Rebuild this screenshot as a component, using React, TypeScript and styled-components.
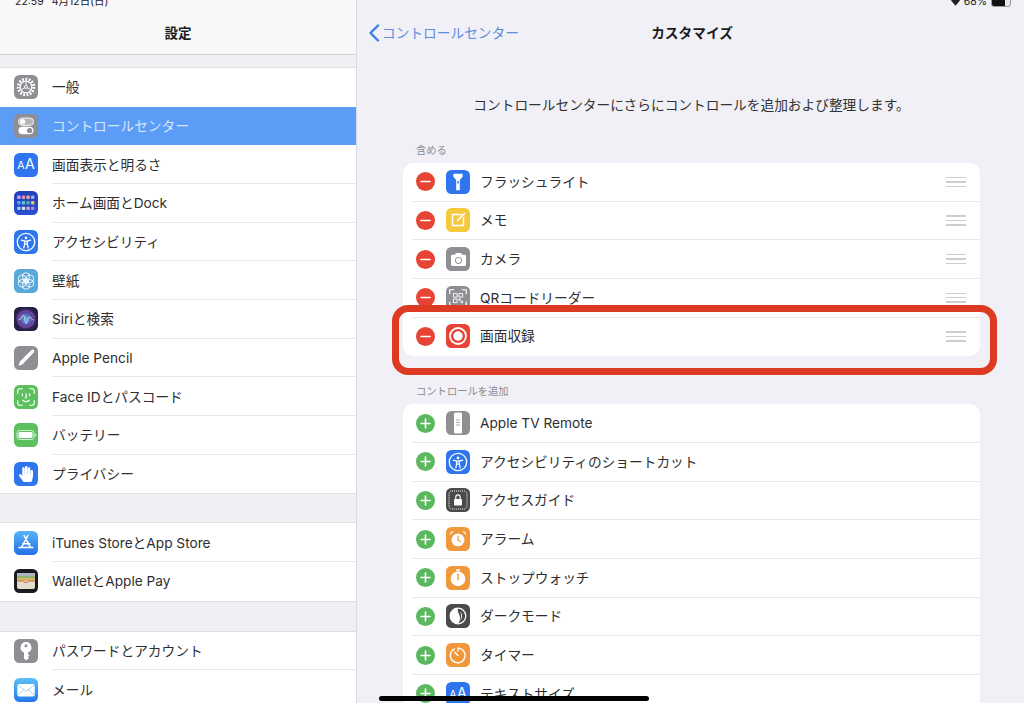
import type { ReactNode } from "react";
import styled, { createGlobalStyle } from "styled-components";
import { FaHandPaper, FaCamera } from "react-icons/fa";

const GlobalStyle = createGlobalStyle`
  html, body {
    margin: 0;
    padding: 0;
    width: 1024px;
    height: 703px;
    overflow: hidden;
    background: #f0f0f6;
  }
  body {
    font-family: Inter, "Noto Sans CJK JP", "Liberation Sans", sans-serif;
    color: #2e2e30;
  }
`

const Screen = styled.div`
  position: relative;
  width: 1024px;
  height: 703px;
  display: grid;
  grid-template-columns: 357px 1fr;
  overflow: hidden;
`

const StatusText = styled.div`
  position: absolute;
  top: -5px;
  font-size: 10.5px;
  line-height: 14px;
  color: #222;
  display: flex;
  align-items: center;
  gap: 4px;
`

const TimeText = styled(StatusText)`
  left: 15px;
  word-spacing: 5px;
`

const BatteryText = styled(StatusText)`
  right: 13px;
`

const Battery = styled.span`
  width: 20px;
  height: 10px;
  border-radius: 3px;
  background: linear-gradient(to right, #111 70%, #e8e8ec 70%);
  border: 1px solid #999;
  box-sizing: border-box;
`

const Sidebar = styled.aside`
  background: #efeff4;
  border-right: 1px solid #dcdce0;
  overflow: hidden;
`

const SideNav = styled.header`
  background: #f8f8f9;
  border-bottom: 1px solid #d2d2d6;
  display: flex;
  align-items: center;
  justify-content: center;
  padding-top: 11px;
  height: 43px;
  font-size: 13.5px;
  line-height: 20px;
  font-weight: 700;
  color: #1c1c1e;
`

const SideGroup = styled.div<{ $gap: number }>`
  margin-top: ${(p) => p.$gap}px;
  background: #fff;
  border-top: 1px solid #dfdfe3;
  border-bottom: 1px solid #dfdfe3;
`

const SideRow = styled.div<{ $active?: boolean }>`
  height: 38.67px;
  box-sizing: border-box;
  padding-left: 14px;
  display: flex;
  align-items: center;
  gap: 14px;
  background: ${(p) => (p.$active ? "#5b9cf6" : "#fff")};
  color: ${(p) => (p.$active ? "#d8e6fc" : "inherit")};
`

const SideLabel = styled.div<{ $line: boolean }>`
  flex: 1;
  height: 100%;
  display: flex;
  align-items: center;
  padding-top: 1px;
  font-size: 13.7px;
  line-height: 20px;
  border-bottom: ${(p) => (p.$line ? "1px solid #e6e6e8" : "1px solid transparent")};
  box-sizing: border-box;
`

const Tile = styled.div<{ $bg: string }>`
  width: 24px;
  height: 24px;
  flex: none;
  border-radius: 5.5px;
  background: ${(p) => p.$bg};
  display: flex;
  align-items: center;
  justify-content: center;
  color: #fff;
  overflow: hidden;

  svg {
    display: block;
  }
`

const TileText = styled.span`
  font-size: 14px;
  line-height: 1;
  color: #fff;

  small {
    font-size: 10.5px;
    margin-right: 0.5px;
  }
`

const Main = styled.main`
  position: relative;
  overflow: hidden;
`

const MainNav = styled.header`
  height: 54px;
  padding: 11px 8px 0 11px;
  box-sizing: border-box;
  display: grid;
  grid-template-columns: 1fr auto 1fr;
  align-items: center;
  line-height: 20px;
`

const BackLink = styled.div`
  display: flex;
  align-items: center;
  gap: 2px;
  color: #5d8de0;
  font-size: 13.7px;
`

const NavTitle = styled.div`
  font-size: 13.7px;
  font-weight: 700;
  color: #1c1c1e;
`

const Content = styled.div`
  padding: 41px 44px 0 46px;
`

const Description = styled.p`
  margin: 0;
  text-align: center;
  font-size: 13.7px;
  line-height: 20px;
  color: #333;
`

const SectionTitle = styled.h3<{ $top: number }>`
  margin: ${(p) => p.$top}px 0 6px 13px;
  font-size: 10.3px;
  line-height: 14px;
  font-weight: 400;
  color: #8b8b90;
`

const Card = styled.div`
  background: #fff;
  border-radius: 10px;
  overflow: hidden;
`

const ControlRow = styled.div<{ $line: boolean }>`
  height: 38.67px;
  box-sizing: border-box;
  margin-left: 9px;
  padding: 0 14px 0 4px;
  display: flex;
  align-items: center;
  border-bottom: ${(p) => (p.$line ? "1px solid #e6e6e8" : "1px solid transparent")};
`

const Badge = styled.div<{ $add: boolean }>`
  width: 19px;
  height: 19px;
  border-radius: 50%;
  flex: none;
  margin-right: 11px;
  background: ${(p) => (p.$add ? "#5cb85f" : "#e74436")};
  display: flex;
  align-items: center;
  justify-content: center;
`

const ControlLabel = styled.div`
  flex: 1;
  margin-left: 10px;
  font-size: 13.7px;
  line-height: 20px;
`

const Handle = styled.div`
  width: 20px;
  display: flex;
  flex-direction: column;
  gap: 3px;

  span {
    height: 1.4px;
    background: #cdcdcf;
  }
`

const Highlight = styled.div`
  position: absolute;
  left: 35px;
  top: 305px;
  width: 605px;
  height: 70px;
  box-sizing: border-box;
  border: 7px solid #dc3b22;
  border-radius: 16px;
`

const HomeBar = styled.div`
  position: absolute;
  left: 379px;
  top: 696px;
  width: 270px;
  height: 5px;
  border-radius: 3px;
  background: #000;
`

const Svg = ({ children, size = 20 }: { children: ReactNode; size?: number }) => (
  <svg width={size} height={size} viewBox="0 0 24 24" fill="none">
    {children}
  </svg>
)

const A11y = () => (
  <Svg size={22}>
    <circle cx="12" cy="12" r="9.5" stroke="#fff" strokeWidth="1.4" />
    <circle cx="12" cy="7.6" r="1.5" fill="#fff" />
    <path d="M7 10l3.6 1v3l-1 4.5M17 10l-3.6 1v3l1 4.5M10.6 11h2.8M11 14.4h2" stroke="#fff" strokeWidth="1.4" strokeLinecap="round" />
  </Svg>
)

const icons: Record<string, { bg: string; glyph: ReactNode }> = {
  general: {
    bg: "#8e8e93",
    glyph: (
      <Svg size={22}>
        <circle cx="12" cy="12" r="8.6" stroke="#fff" strokeWidth="3" strokeDasharray="2 1.6" />
        <circle cx="12" cy="12" r="6.4" stroke="#fff" strokeWidth="1.4" />
        <circle cx="12" cy="12" r="1.6" stroke="#fff" strokeWidth="1" />
        <path d="M12 10.4V6M13.4 12.8l3.8 2.2M10.6 12.8l-3.8 2.2" stroke="#fff" strokeWidth="1" />
      </Svg>
    ),
  },
  control: {
    bg: "#8e8e93",
    glyph: (
      <Svg size={24}>
        <rect x="4.5" y="4" width="15" height="7.4" rx="3.7" fill="#fff" fillOpacity=".35" stroke="#fff" strokeWidth=".9" />
        <circle cx="8.6" cy="7.7" r="2.6" fill="#fff" />
        <rect x="4.5" y="12.8" width="15" height="7.4" rx="3.7" fill="#fff" />
        <circle cx="15.6" cy="16.5" r="2.6" fill="#8e8e93" />
      </Svg>
    ),
  },
  display: { bg: "#2f76ee", glyph: <TileText><small>A</small>A</TileText> },
  home: {
    bg: "linear-gradient(#2440b8, #2a4fd0)",
    glyph: (
      <Svg size={24}>
        {["#c2a6e8", "#e58ab8", "#f2a56b", "#8fb6f2", "#5ea6f2", "#62c1d8", "#4bb58a", "#e5c85f", "#9ad0e8", "#cfe4f2", "#e8a0a8", "#a08fd8"].map((c, i) => (
          <rect key={i} x={3.2 + (i % 4) * 4.6} y={4.5 + Math.floor(i / 4) * 5.6} width="3.4" height="3.4" rx="1" fill={c} />
        ))}
      </Svg>
    ),
  },
  a11y: { bg: "#2f76ee", glyph: <A11y /> },
  wallpaper: {
    bg: "#58a9da",
    glyph: (
      <Svg size={22}>
        {[0, 60, 120, 180, 240, 300].map((r) => (
          <circle key={r} cx="12" cy="7" r="4" stroke="#fff" strokeWidth="1" transform={`rotate(${r} 12 12)`} />
        ))}
        <circle cx="12" cy="12" r="2.6" stroke="#fff" strokeWidth="1" />
      </Svg>
    ),
  },
  siri: {
    bg: "radial-gradient(circle at 50% 50%, #6fb4d8 0%, #5a4aa8 38%, #2a2350 62%, #10122c 100%)",
    glyph: (
      <Svg size={22}>
        <circle cx="12" cy="12" r="9" stroke="#8a4a9c" strokeWidth="1.2" />
        <path d="M4 13c3 0 3-5 5-5s2 9 3 9 2-7 4-7 2 3 4 3" stroke="#bfe6f5" strokeWidth="1" />
      </Svg>
    ),
  },
  pencil: {
    bg: "#8e8e93",
    glyph: (
      <Svg size={24}>
        <path d="M4.5 20l1.4-4.6L17.4 4c.8-.8 1.8-.6 2.4 0s.8 1.6 0 2.4L8.6 18.2z" fill="#fff" />
      </Svg>
    ),
  },
  face: {
    bg: "#5cc05f",
    glyph: (
      <Svg size={22}>
        <path d="M3 8V5.5A2.5 2.5 0 0 1 5.5 3H8M16 3h2.5A2.5 2.5 0 0 1 21 5.5V8M21 16v2.5a2.5 2.5 0 0 1-2.5 2.5H16M8 21H5.5A2.5 2.5 0 0 1 3 18.5V16" stroke="#fff" strokeWidth="1.3" strokeLinecap="round" />
        <path d="M8 8.5v2M16 8.5v2M12.2 8.5v4.3h-1M8.5 15.5c2 1.8 5 1.8 7 0" stroke="#fff" strokeWidth="1.3" strokeLinecap="round" />
      </Svg>
    ),
  },
  battery: {
    bg: "#5cc05f",
    glyph: (
      <Svg size={24}>
        <rect x="3" y="7.5" width="17" height="9" rx="2.4" stroke="#d8f0d8" strokeWidth="1" />
        <rect x="4.5" y="9" width="14" height="6" rx="1.2" fill="#fff" />
        <rect x="20.6" y="10.4" width="1.2" height="3.2" rx=".6" fill="#d8f0d8" />
      </Svg>
    ),
  },
  privacy: { bg: "#2f76ee", glyph: <FaHandPaper size={16} /> },
  store: {
    bg: "linear-gradient(#58b4f5, #2470e8)",
    glyph: (
      <Svg size={22}>
        <path d="M14 4L7 17M10 4l7 13M4.5 17h15M8.5 12.8h7.5" stroke="#fff" strokeWidth="1.7" strokeLinecap="round" />
      </Svg>
    ),
  },
  wallet: {
    bg: "#1b1b1d",
    glyph: (
      <Svg size={24}>
        <rect x="3" y="4" width="18" height="16" rx="2" fill="#e4dccb" />
        <rect x="3" y="4" width="18" height="3" fill="#a9b6c4" />
        <rect x="3" y="7" width="18" height="2.6" fill="#93b36c" />
        <rect x="3" y="9.6" width="18" height="2.4" fill="#e2b45a" />
        <path d="M3 12h6.5c.5 2 4.5 2 5 0H21" stroke="#c96a52" strokeWidth="1" />
      </Svg>
    ),
  },
  key: {
    bg: "#8e8e93",
    glyph: (
      <Svg size={24}>
        <path
          fillRule="evenodd"
          clipRule="evenodd"
          d="M12 3a5.5 5.5 0 0 1 2 10.6V15l1.5 1.3-1.5 1.4 1.2 1.2L12 21.500l-2-2v-5.900A5.500 5.500 0 0 1 12 3zm0 2.200a1.500 1.500 0 1 0 0 3 1.500 1.500 0 0 0 0-3z"
          fill="#fff"
        />
      </Svg>
    ),
  },
  mail: {
    bg: "linear-gradient(#5cc0f5, #2478ea)",
    glyph: (
      <Svg size={22}>
        <rect x="2.5" y="5.5" width="19" height="13.5" rx="1.8" fill="#fff" />
        <path d="M3 6.5l9 7 9-7M3 18l6.5-6.5M21 18l-6.5-6.5" stroke="#8cc4f0" strokeWidth=".9" />
      </Svg>
    ),
  },
  flash: {
    bg: "#2f76ee",
    glyph: (
      <Svg size={22}>
        <path d="M7 3h10v3.2l-3 3.500V21h-4V9.700L7 6.200z" fill="#fff" />
        <rect x="11.2" y="11" width="1.6" height="3" rx=".8" fill="#2f76ee" />
      </Svg>
    ),
  },
  memo: {
    bg: "#f6c83c",
    glyph: (
      <Svg size={22}>
        <path d="M16 6H6v12h12V9" stroke="#fff" strokeWidth="1.6" />
        <path d="M11 13L19.5 4.5" stroke="#fff" strokeWidth="2" />
      </Svg>
    ),
  },
  camera: { bg: "#8e8e93", glyph: <FaCamera size={15} /> },
  qr: {
    bg: "#8e8e93",
    glyph: (
      <Svg size={22}>
        <path d="M3 8V3h5M16 3h5v5M21 16v5h-5M8 21H3v-5" stroke="#fff" strokeWidth="1.3" />
        <path d="M7 7h4v4H7zM13 7h4v4h-4zM7 13h4v4H7zM13 13h1.5v1.500H13zM15.500 15.500H17V17h-1.500z" stroke="#fff" strokeWidth="1" />
      </Svg>
    ),
  },
  record: {
    bg: "#e74436",
    glyph: (
      <Svg size={24}>
        <circle cx="12" cy="12" r="8" stroke="#fff" strokeWidth="1.8" />
        <circle cx="12" cy="12" r="4.7" fill="#fff" />
      </Svg>
    ),
  },
  remote: {
    bg: "#8e8e93",
    glyph: (
      <Svg size={24}>
        <rect x="8" y="1.5" width="8" height="21" rx="1.5" fill="#fff" />
        <path d="M10.5 9h1M12.5 9h1M10.5 11.5h1M12.5 11.5h1M10.5 14h1M12.5 14h1" stroke="#555" strokeWidth="1" />
      </Svg>
    ),
  },
  guided: {
    bg: "#4a4a4c",
    glyph: (
      <Svg size={24}>
        <rect x="3" y="3" width="18" height="18" rx="3" stroke="#fff" strokeWidth="1" strokeDasharray="1 1" />
        <rect x="8" y="11" width="8" height="6.5" rx="1" fill="#fff" />
        <path d="M9.800 11V9a2.200 2.200 0 0 1 4.400 0v2" stroke="#fff" strokeWidth="1.2" />
      </Svg>
    ),
  },
  alarm: {
    bg: "#f0983a",
    glyph: (
      <Svg size={22}>
        <circle cx="12" cy="13" r="7" fill="#fff" />
        <path d="M12 8.500V13l3 2" stroke="#f0983a" strokeWidth="1.3" />
        <path d="M3 7.500A4 4 0 0 1 7.500 3.500zM21 7.500A4 4 0 0 0 16.500 3.500z" fill="#fff" />
      </Svg>
    ),
  },
  stopwatch: {
    bg: "#f0983a",
    glyph: (
      <Svg size={22}>
        <circle cx="12" cy="13" r="8" fill="#fff" />
        <rect x="10" y="2.5" width="4" height="2" fill="#fff" />
        <path d="M12 8v5.500" stroke="#f0983a" strokeWidth="1.6" strokeLinecap="round" />
      </Svg>
    ),
  },
  dark: {
    bg: "#4a4a4c",
    glyph: (
      <Svg size={22}>
        <circle cx="12" cy="12" r="8.5" stroke="#fff" strokeWidth="1.4" />
        <path d="M12 3.500a8.500 8.500 0 0 0 0 17c2-2.500 2.800-5.500 1.800-8.500S11 6 12 3.500z" fill="#fff" />
        <path d="M14.500 7c2.500 2.500 2.500 7.500 0 10 1.200-3.300 1.200-6.700 0-10z" fill="#fff" />
      </Svg>
    ),
  },
  timer: {
    bg: "#f0983a",
    glyph: (
      <Svg size={22}>
        <path d="M8 5.400A8 8 0 1 0 12 4.500v3" stroke="#fff" strokeWidth="1.5" strokeLinecap="round" />
        <path d="M8.500 9l3.500 3.500" stroke="#fff" strokeWidth="1.5" strokeLinecap="round" />
      </Svg>
    ),
  },
  text: { bg: "#2f76ee", glyph: <TileText><small>A</small>A</TileText> },
}

const Icon = ({ name }: { name: string }) => <Tile $bg={icons[name].bg}>{icons[name].glyph}</Tile>

const sideGroups = [
  {
    gap: 12,
    rows: [
      ["general", "一般"],
      ["control", "コントロールセンター"],
      ["display", "画面表示と明るさ"],
      ["home", "ホーム画面とDock"],
      ["a11y", "アクセシビリティ"],
      ["wallpaper", "壁紙"],
      ["siri", "Siriと検索"],
      ["pencil", "Apple Pencil"],
      ["face", "Face IDとパスコード"],
      ["battery", "バッテリー"],
      ["privacy", "プライバシー"],
    ],
  },
  {
    gap: 28,
    rows: [
      ["store", "iTunes StoreとApp Store"],
      ["wallet", "WalletとApple Pay"],
    ],
  },
  {
    gap: 29,
    rows: [
      ["key", "パスワードとアカウント"],
      ["mail", "メール"],
    ],
  },
]

const included = [
  ["flash", "フラッシュライト"],
  ["memo", "メモ"],
  ["camera", "カメラ"],
  ["qr", "QRコードリーダー"],
  ["record", "画面収録"],
]

const more = [
  ["remote", "Apple TV Remote"],
  ["a11y", "アクセシビリティのショートカット"],
  ["guided", "アクセスガイド"],
  ["alarm", "アラーム"],
  ["stopwatch", "ストップウォッチ"],
  ["dark", "ダークモード"],
  ["timer", "タイマー"],
  ["text", "テキストサイズ"],
]

function ControlList({ rows, add }: { rows: string[][]; add: boolean }) {
  return (
    <Card>
      {rows.map(([icon, label], i) => (
        <ControlRow key={label} $line={i < rows.length - 1}>
          <Badge $add={add}>
            <svg width="11" height="11" viewBox="0 0 11 11">
              <path d={add ? "M1 5.5h9M5.5 1v9" : "M1 5.5h9"} stroke="#fff" strokeWidth="1.6" strokeLinecap="round" />
            </svg>
          </Badge>
          <Icon name={icon} />
          <ControlLabel>{label}</ControlLabel>
          {!add && (
            <Handle>
              <span />
              <span />
              <span />
            </Handle>
          )}
        </ControlRow>
      ))}
    </Card>
  )
}

export default function App(): JSX.Element {
  return (
    <>
      <GlobalStyle />
      <Screen>
        <Sidebar>
          <SideNav>設定</SideNav>
          {sideGroups.map((group) => (
            <SideGroup key={group.rows[0][0]} $gap={group.gap}>
              {group.rows.map(([icon, label], i) => {
                const active = icon === "control"
                const beforeActive = icon === "general"
                const last = i === group.rows.length - 1
                return (
                  <SideRow key={label} $active={active}>
                    <Icon name={icon} />
                    <SideLabel $line={!active && !beforeActive && !last}>{label}</SideLabel>
                  </SideRow>
                )
              })}
            </SideGroup>
          ))}
        </Sidebar>
        <Main>
          <MainNav>
            <BackLink>
              <svg width="12" height="18" viewBox="0 0 12 18" fill="none">
                <path d="M10 1.5L2.5 9l7.5 7.5" stroke="#3f7fe8" strokeWidth="2.4" strokeLinecap="round" strokeLinejoin="round" />
              </svg>
              コントロールセンター
            </BackLink>
            <NavTitle>カスタマイズ</NavTitle>
          </MainNav>
          <Content>
            <Description>コントロールセンターにさらにコントロールを追加および整理します。</Description>
            <SectionTitle $top={28}>含める</SectionTitle>
            <ControlList rows={included} add={false} />
            <SectionTitle $top={28}>コントロールを追加</SectionTitle>
            <ControlList rows={more} add />
          </Content>
          <Highlight />
        </Main>
        <TimeText>22:59 4月12日(日)</TimeText>
        <BatteryText>
          <svg width="9" height="10" viewBox="0 0 12 10">
            <path d="M0 3a9 9 0 0 1 12 0L6 10z" fill="#222" />
          </svg>
          68%
          <Battery />
        </BatteryText>
        <HomeBar />
      </Screen>
    </>
  )
}
